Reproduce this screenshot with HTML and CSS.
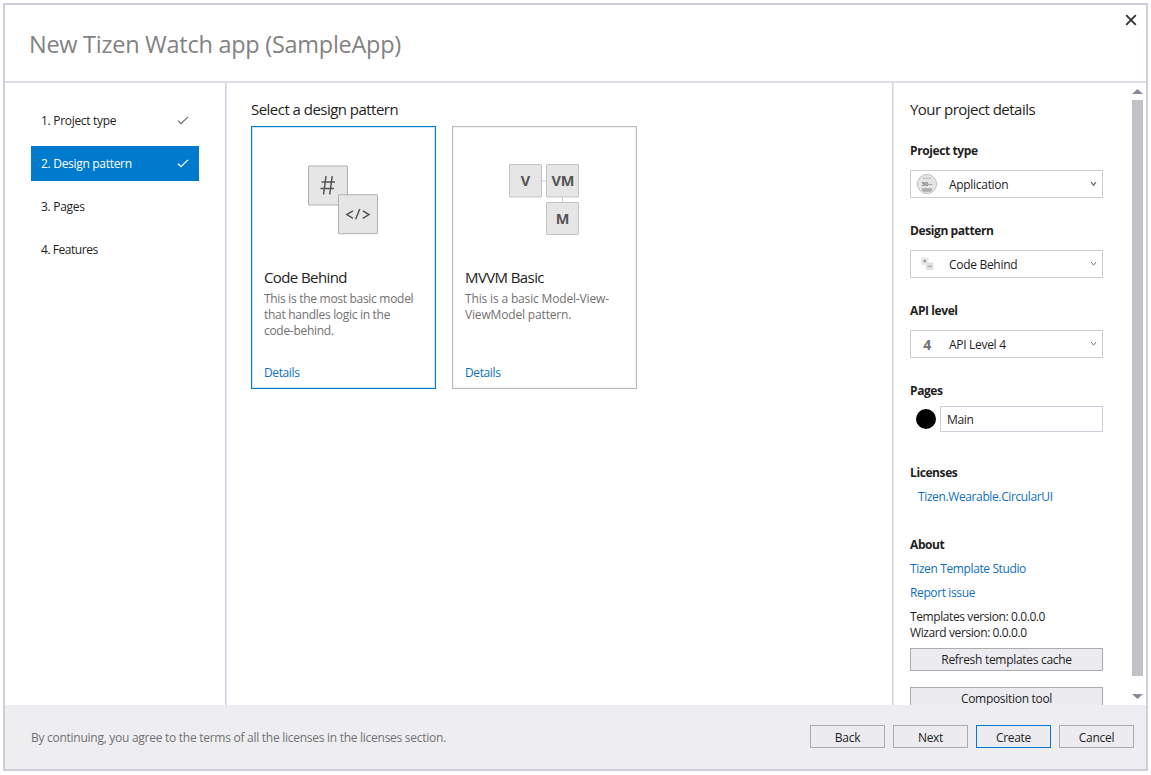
FILE: index.html
```html
<!DOCTYPE html>
<html lang="en">
<head>
<meta charset="utf-8">
<title>New Tizen Watch app</title>
<link rel="stylesheet" href="styles.css">
</head>
<body>
<div class="window">
  <header class="header">
    <h1 class="title">New Tizen Watch app (SampleApp)</h1>
    <svg class="close" width="12" height="12" viewBox="0 0 12 12"><path d="M1.2 1.2 10.8 10.8M10.8 1.2 1.2 10.8" fill="none" stroke="#333" stroke-width="1.9"/></svg>
  </header>
  <div class="main">
    <nav class="steps">
      <div class="step"><span>1. Project type</span><svg class="check" width="12" height="10" viewBox="0 0 12 10"><path d="M1 4.700 4 7.700 11 .9" fill="none" stroke="#666" stroke-width="1.1"/></svg></div>
      <div class="step active"><span>2. Design pattern</span><svg class="check" width="12" height="10" viewBox="0 0 12 10"><path d="M1 4.700 4 7.700 11 .9" fill="none" stroke="#fff" stroke-width="1.3"/></svg></div>
      <div class="step"><span>3. Pages</span></div>
      <div class="step"><span class="tight">4. Features</span></div>
    </nav>
    <section class="content">
      <h2 class="heading">Select a design pattern</h2>
      <div class="cards">
        <article class="card selected">
          <svg class="art" width="183" height="144" viewBox="252 127 183 144">
            <rect x="308.5" y="166" width="39" height="39" rx=".5" fill="#e6e6e6" stroke="#b0b0b0"/>
            <path d="M326 176.200 323.500 194.500M332.200 176.200 329.700 194.500M321.500 182H335M320.500 188.600H334" fill="none" stroke="#555" stroke-width="1.5"/>
            <rect x="338.500" y="194.700" width="39" height="39" rx=".5" fill="#e6e6e6" stroke="#b0b0b0"/>
            <path d="M353 210.800 346.800 214.600 353 218.400M359.800 209 355.600 219.300M362.800 210.800 369 214.600 362.800 218.400" fill="none" stroke="#555" stroke-width="1.5"/>
          </svg>
          <h3 class="name">Code Behind</h3>
          <p class="desc">This is the most basic model<br>that handles logic in the<br>code-behind.</p>
          <a class="link details">Details</a>
        </article>
        <article class="card">
          <svg class="art" width="183" height="144" viewBox="453 127 183 144">
            <path d="M542 181H546M562.500 197V203" stroke="#ccc" fill="none"/>
            <g fill="#e6e6e6" stroke="#c4c4c4">
              <rect x="509.500" y="164.500" width="32" height="32.500" rx=".5"/>
              <rect x="546.500" y="164.500" width="32" height="32.500" rx=".5"/>
              <rect x="546.500" y="202.500" width="32" height="32" rx=".5"/>
            </g>
            <g class="art-text" text-anchor="middle">
              <text x="525.500" y="186">V</text>
              <text x="563" y="186">VM</text>
              <text x="562.500" y="224">M</text>
            </g>
          </svg>
          <h3 class="name">MVVM Basic</h3>
          <p class="desc loose">This is a basic Model-View-<br>ViewModel pattern.</p>
          <a class="link details">Details</a>
        </article>
      </div>
    </section>
    <aside class="side">
      <div class="panel">
        <h2 class="heading">Your project details</h2>
        <div class="field">
          <h4 class="label">Project type</h4>
          <div class="combo">
            <svg width="22" height="22" viewBox="0 0 22 22"><circle cx="11" cy="11" r="9.600" fill="#e6e6e6" stroke="#c0c0c0"/><path d="M7 5.200H15" stroke="#b0b0b0" stroke-width="1.200" stroke-dasharray="2 .8"/><text class="watch-text" x="5.500" y="13">30</text><path d="M12 11.500H16.500" stroke="#aaa" stroke-width="1.200"/><path d="M6 15.300H16Q17 17 15 18.700H7Q5 17 6 15.300Z" fill="#ababab"/></svg>
            <span class="value">Application</span>
            <svg class="chev" width="7" height="6" viewBox="0 0 7 6"><path d="M1 1 3.500 4.200 6 1" fill="none" stroke="#666" stroke-width="1.200"/></svg>
          </div>
        </div>
        <div class="field">
          <h4 class="label">Design pattern</h4>
          <div class="combo">
            <svg width="22" height="22" viewBox="0 0 22 22"><rect x="5" y="4.500" width="7.500" height="7.500" fill="#e8e8e8"/><rect x="10" y="9.500" width="7.500" height="7.500" fill="#e2e2e2"/><path d="M7.500 8H10" stroke="#999" stroke-width="2.500"/><path d="M11.500 13.300H16" stroke="#b5b5b5" stroke-width="1.500"/></svg>
            <span class="value">Code Behind</span>
            <svg class="chev" width="7" height="6" viewBox="0 0 7 6"><path d="M1 1 3.500 4.200 6 1" fill="none" stroke="#777" stroke-width="1"/></svg>
          </div>
        </div>
        <div class="field">
          <h4 class="label">API level</h4>
          <div class="combo">
            <span class="level">4</span>
            <span class="value">API Level 4</span>
            <svg class="chev" width="7" height="6" viewBox="0 0 7 6"><path d="M1 1 3.500 4.200 6 1" fill="none" stroke="#777" stroke-width="1"/></svg>
          </div>
        </div>
        <div class="pages">
          <h4 class="label">Pages</h4>
          <div class="page-row"><span class="dot"></span><div class="input">Main</div></div>
        </div>
        <div class="licenses">
          <h4 class="label">Licenses</h4>
          <a class="link license">Tizen.Wearable.CircularUI</a>
        </div>
        <div class="about">
          <h4 class="label">About</h4>
          <a class="link row">Tizen Template Studio</a>
          <a class="link row">Report issue</a>
          <p class="versions"><span class="ver">Templates version: 0.0.0.0</span><span class="ver">Wizard version: 0.0.0.0</span></p>
        </div>
        <div class="btn wide">Refresh templates cache</div>
        <div class="btn wide">Composition tool</div>
      </div>
      <div class="scrollbar">
        <svg width="11" height="5" viewBox="0 0 11 5"><path d="M0 5 5.500 0 11 5Z" fill="#868999"/></svg>
        <div class="thumb"></div>
        <svg width="11" height="5" viewBox="0 0 11 5"><path d="M0 0 5.500 5 11 0Z" fill="#868999"/></svg>
      </div>
    </aside>
  </div>
  <footer class="footer">
    <span class="terms">By continuing, you agree to the terms of all the licenses in the licenses section.</span>
    <div class="actions">
      <div class="btn">Back</div>
      <div class="btn">Next</div>
      <div class="btn primary">Create</div>
      <div class="btn">Cancel</div>
    </div>
  </footer>
</div>
</body>
</html>
```
FILE: styles.css
```css
* { box-sizing: border-box; }
body {
  margin: 0;
  padding: 3px;
  background: #fff;
  font-family: "Open Sans", "Noto Sans", sans-serif;
  font-size: 12px;
  line-height: 16px;
  letter-spacing: -0.3px;
  color: #1e1e1e;
  white-space: nowrap;
  overflow: hidden;
}
h1, h2, h3, h4, p { margin: 0; font-weight: 400; }
svg { display: block; flex: none; }
.window {
  width: 1145px;
  height: 768px;
  border: 2px solid #cccedb;
  display: flex;
  flex-direction: column;
}
.header {
  height: 78px;
  flex: none;
  border-bottom: 2px solid #dddee7;
  display: flex;
  justify-content: space-between;
  padding: 9px 9px 0 24px;
}
.title { font-size: 23.5px; line-height: 60px; color: #828282; letter-spacing: -0.27px; }
.main { height: 622px; flex: none; display: flex; }
.steps {
  width: 221px;
  margin-right: 1px;
  border-right: 1px solid #cfd1dd;
  box-shadow: 1px 0 0 #e6e7ee;
  padding: 20px 0 0 26px;
  display: flex;
  flex-direction: column;
  gap: 8px;
}
.step {
  width: 168px;
  height: 35px;
  padding: 0 10px;
  display: flex;
  align-items: center;
  justify-content: space-between;
}
.tight { letter-spacing: -0.45px; }
.active { background: #007acc; color: #fff; }
.content { flex: 1; padding: 16px 0 0 24px; }
.heading { font-size: 15px; line-height: 20px; letter-spacing: -0.53px; }
.cards { display: flex; gap: 16px; margin-top: 7px; }
.card {
  width: 185px;
  height: 263px;
  border: 1px solid #bcbcbc;
  box-shadow: inset 0 0 0 1px #f3f3f3;
  display: flex;
  flex-direction: column;
}
.selected { border-color: #007acc; box-shadow: inset 0 0 0 1px #d0e7f7; }
.art-text { font-size: 14.500px; font-weight: 700; fill: #555; letter-spacing: 0; }
.name { font-size: 15px; line-height: 20px; margin-left: 12px; margin-top: -4px; letter-spacing: -0.6px; }
.name + .desc { margin: 4px 0 0 12px; }
.desc { color: #717171; }
.loose { letter-spacing: -0.16px; }
.link { color: #0e70c0; letter-spacing: -0.38px; }
.details { margin: auto 0 7px 12px; }
.side { width: 254px; border-left: 1px solid #cfd1dd; box-shadow: inset 1px 0 0 #e6e7ee; display: flex; justify-content: space-between; overflow: hidden; }
.panel { width: 210px; padding: 16px 0 0 17px; }
.label { font-weight: 700; letter-spacing: -0.4px; }
.field { height: 80px; }
.panel .heading { margin-bottom: 24px; }
.combo {
  height: 28px;
  margin-top: 11px;
  border: 1px solid #ccceda;
  display: flex;
  align-items: center;
  padding: 0 5px;
}
.value { margin-left: 11px; flex: 1; padding-top: 2px; }
.chev { margin-bottom: 1px; }
.level { width: 22px; text-align: center; font-weight: 700; font-size: 14px; color: #717171; padding-top: 2px; }
.watch-text { font-size: 6px; font-weight: 700; fill: #777; }
.pages { height: 82px; }
.page-row { display: flex; align-items: center; justify-content: space-between; margin-top: 7px; }
.dot { width: 20px; height: 20px; margin-left: 6px; border-radius: 50%; background: #000; }
.input { width: 163px; height: 26px; border: 1px solid #ccceda; padding: 5px 6px; }
.licenses { height: 72px; }
.license { display: block; margin: 8px 0 0 8px; }
.row { display: block; margin-top: 8px; }
.versions { margin-top: 8px; letter-spacing: -0.4px; }
.ver { display: block; }
.btn {
  width: 75px;
  height: 23px;
  border: 1px solid #acacac;
  background: #ececf0;
  text-align: center;
  line-height: 23px;
}
.wide { width: 193px; margin-top: 7px; line-height: 22px; }
.wide + .wide { margin-top: 16px; }
.primary { border-color: #007acc; }
.scrollbar { margin: 6px 3px 6px 0; display: flex; flex-direction: column; justify-content: space-between; }
.thumb { height: 576px; width: 11px; background: #c2c3c9; margin-bottom: 12px; }
.footer {
  flex: 1;
  background: #eeeef1;
  display: flex;
  justify-content: space-between;
  align-items: flex-start;
  padding: 20px 12px 0 26px;
}
.terms { line-height: 26px; color: #717171; letter-spacing: -0.27px; }
.actions { display: flex; gap: 8px; }
```
